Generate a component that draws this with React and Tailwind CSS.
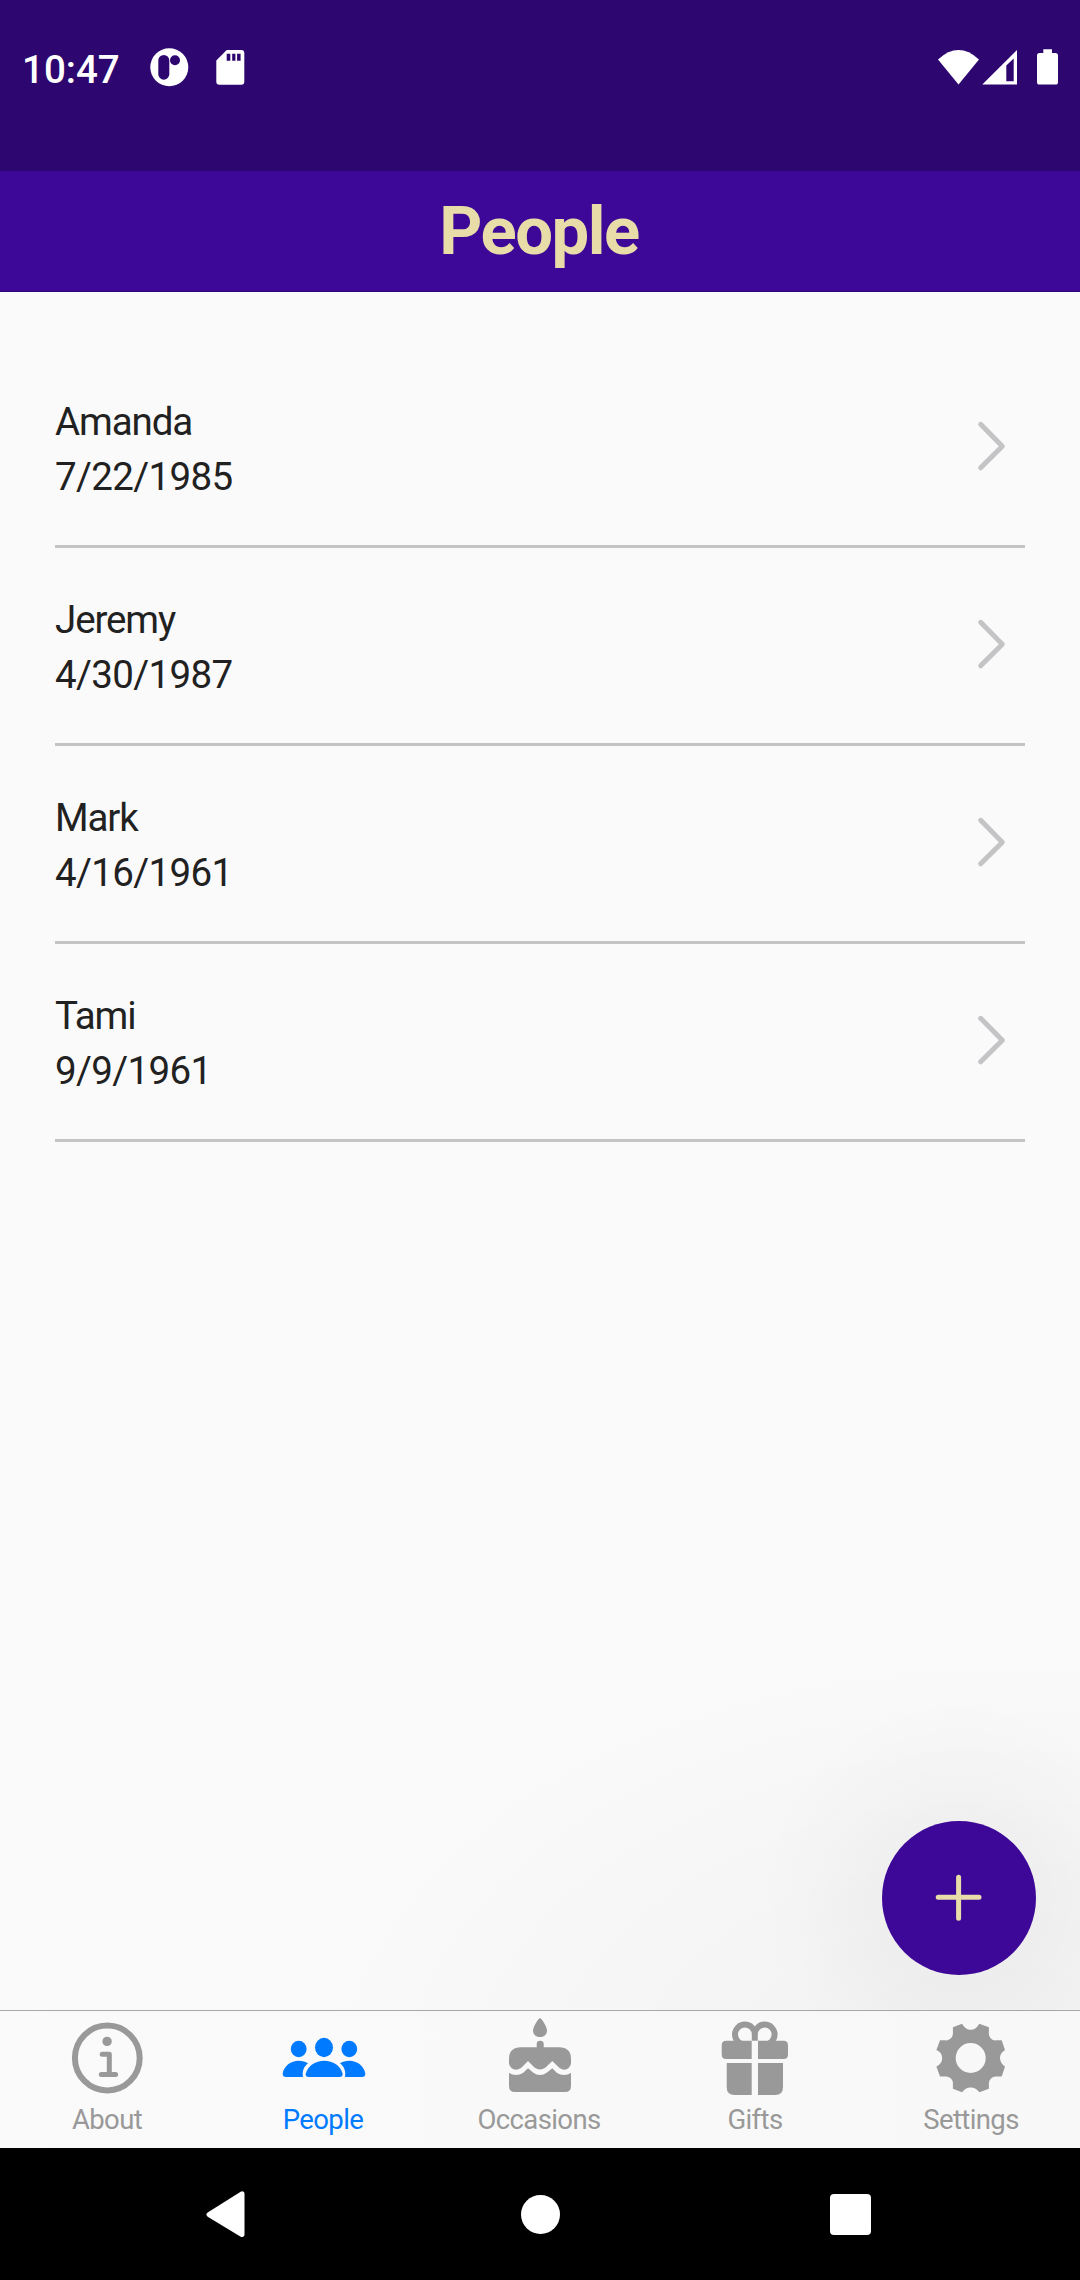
const people = [
  { name: "Amanda", date: "7/22/1985" },
  { name: "Jeremy", date: "4/30/1987" },
  { name: "Mark", date: "4/16/1961" },
  { name: "Tami", date: "9/9/1961" },
];

function StatusBar() {
  return (
    <div className="flex h-[171px] shrink-0 items-start bg-[#2d0670] pt-[46px] pl-[22px] text-white">
      <span className="mt-px w-[100px] text-[38.5px] leading-[46px] font-medium">10:47</span>
      <svg className="ml-[28px] h-[42px] w-[40px]" viewBox="0 0 40 42">
        <circle cx="19.3" cy="21.3" r="19" fill="currentColor" />
        <rect x="8.3" y="9" width="11" height="24.7" rx="5.5" fill="#2d0670" />
        <circle cx="25" cy="14.3" r="5" fill="#2d0670" />
      </svg>
      <svg className="ml-[26px] h-[42px] w-[30px]" viewBox="0 0 30 42">
        <path d="M10.7 4H25.3Q28.3 4 28.3 7V35.7Q28.3 38.7 25.3 38.7H3.3Q.3 38.7 .3 35.7V14.5Z" fill="currentColor" />
        <path d="M10.7 7.7h3.6v7h-3.6zM16.2 7.7h3.2v7h-3.2zM21.1 7.7h3.5v7h-3.5z" fill="#2d0670" />
      </svg>
      <div className="ml-auto flex pr-[22px]">
        <svg className="h-[42px] w-[42px]" viewBox="0 0 42 42">
          <path d="M20.5 38.5L0 13.5Q20.5 -5.3 41 13.5Z" fill="currentColor" />
        </svg>
        <svg className="ml-[2px] h-[42px] w-[36px]" viewBox="0 0 36 42">
          <path fillRule="evenodd" d="M.3 38.6L35 4V38.6ZM24.3 19.5V35.2H31.7V12.5Z" fill="currentColor" />
        </svg>
        <svg className="ml-[19px] h-[42px] w-[21px]" viewBox="0 0 21 42">
          <path d="M6.3 3.3H15V7H18.5Q21 7 21 9.5V36Q21 38.6 18.5 38.6H2.5Q0 38.6 0 36V9.5Q0 7 2.5 7H6.3Z" fill="currentColor" />
        </svg>
      </div>
    </div>
  );
}

function Row({ name, date }) {
  return (
    <li className="flex h-[198px] items-center justify-between border-b-[3px] border-[#c4c4c6]">
      <div className="mt-[2px] text-[38.5px] leading-[55px] text-[#212121]">
        <div className="tracking-[-1.1px]">{name}</div>
        <div className="tracking-[-0.65px]">{date}</div>
      </div>
      <svg className="mr-[18px] -mt-[4px] h-[52px] w-[30px]" viewBox="0 0 30 52">
        <path d="M3.7 4.3L25.3 26.2L3.7 47.8" fill="none" stroke="#c4c4c6" strokeWidth="5" strokeLinecap="round" strokeLinejoin="round" />
      </svg>
    </li>
  );
}

function AboutIcon() {
  return (
    <>
      <circle cx="44.3" cy="46" r="32.4" fill="none" stroke="currentColor" strokeWidth="6" />
      <circle cx="44.1" cy="29.4" r="4.7" fill="currentColor" />
      <path d="M39.2 42.2H46.3V62.6M38.3 62.6H52.6" fill="none" stroke="currentColor" strokeWidth="5" strokeLinecap="round" strokeLinejoin="round" />
    </>
  );
}

function PeopleIcon() {
  return (
    <g fill="currentColor">
      <ellipse cx="45" cy="35.5" rx="9" ry="9.7" />
      <ellipse cx="19.7" cy="37" rx="7.9" ry="8.3" />
      <ellipse cx="70.3" cy="37" rx="7.9" ry="8.3" />
      <path d="M7 65Q3.6 65 3.7 61.5C4.8 54 12 48.7 19.7 48.7C23.3 48.7 26.7 49.7 29 51.2C25 54.5 23 58.5 24 65Z" />
      <path d="M83 65Q86.4 65 86.3 61.5C85.2 54 78 48.7 70.3 48.7C66.7 48.7 63.3 49.7 61 51.2C65 54.5 67 58.5 66 65Z" />
      <path d="M30 65Q26 65 26.8 61.5C29 53.5 36.5 48.7 45.2 48.7S61.5 53.5 63.6 61.5Q64 65 60.5 65Z" />
    </g>
  );
}

function CakeIcon() {
  return (
    <g fill="currentColor">
      <path d="M45 6C46.5 6 52 15 52 18.5C52 22.5 49 25 45 25S38 22.5 38 18.5C38 15 43.5 6 45 6Z" />
      <path d="M41.7 35.3V32Q41.7 28.7 45.2 28.7T48.7 32V35.3H64Q76 35.3 76 47V52Q74 57.7 69.5 57.7Q67 57.7 64.5 56L57.3 49L50.5 55.5Q45 59.5 39.5 55.5L33 49L26 56Q23.5 57.7 20.7 57.7Q16 57.7 14 52V47Q14 35.3 26 35.3Z" />
      <path d="M14 61C18.5 63.5 23.5 63.5 28 61L33 56.3L38 60.5Q45 65.5 52 60.5L57.3 56.3L62 61C66.5 63.5 71.5 63.5 76 61V74Q76 80 70 80H20Q14 80 14 74Z" />
    </g>
  );
}

function GiftIcon() {
  return (
    <>
      <g fill="currentColor">
        <path d="M40.7 28.7V47H15Q10.7 47 10.7 42.5V33.2Q10.7 28.7 15 28.7ZM47 28.7H72.7Q77 28.7 77 33.2V42.5Q77 47 72.7 47H47Z" />
        <path d="M15.7 51H40.7V83H23.5Q15.7 83 15.7 75ZM47 51H72V75Q72 83 64.2 83H47Z" />
      </g>
      <path d="M43.8 28.7V22.5A9.9 9.9 0 1 0 33.9 32.4M43.8 22.5A9.9 9.9 0 1 1 53.7 32.4" fill="none" stroke="currentColor" strokeWidth="6" />
    </>
  );
}

function GearIcon() {
  return (
    <path
      transform="translate(43.7 46)"
      fill="currentColor"
      fillRule="evenodd"
      d="M8.6 -34.3L18.2 -30.7V-26C17.5 -21 21.5 -17 26 -17.7H31L34.3 -8Q29.3 -5 29.3 0T34.3 8.6L31 18.6H26C21.5 18 17.7 22 18.2 27V30.7L8.6 34.3Q5.5 29.6 0 29.6T-8.6 34.3L-17.8 30.7V26C-17.2 22 -21 18 -26 18.6H-30.7L-34.3 8.6Q-28.5 5.5 -28.5 0T-34.3 -8L-30.7 -17.7H-26C-21 -17 -17.2 -21 -17.8 -26V-30.7L-8.6 -34.3Q-5.5 -28.2 0 -28.2T8.6 -34.3ZM0 -15A15 15 0 1 0 0 15A15 15 0 1 0 0 -15Z"
    />
  );
}

const tabs = [
  { label: "About", Icon: AboutIcon },
  { label: "People", Icon: PeopleIcon, active: true },
  { label: "Occasions", Icon: CakeIcon },
  { label: "Gifts", Icon: GiftIcon },
  { label: "Settings", Icon: GearIcon },
];

function TabBar() {
  return (
    <nav className="relative grid h-[138px] shrink-0 grid-cols-5 border-t border-[#a7a7aa] bg-gradient-to-r from-[#fafafa] to-[#f8f8f8]">
      {tabs.map(({ label, Icon, active }) => (
        <div key={label} className={active ? "flex flex-col items-center pt-px text-[#007aff]" : "flex flex-col items-center pt-px text-[#999999]"}>
          <svg className="h-[84px] w-[90px] shrink-0" viewBox="0 0 90 84">
            <Icon />
          </svg>
          <span className="mr-[2px] text-[27.5px] leading-[48px] tracking-[-0.6px]">{label}</span>
        </div>
      ))}
    </nav>
  );
}

function SystemNav() {
  return (
    <div className="flex h-[132px] shrink-0 items-center justify-between bg-black pr-[209px] pl-[206px] text-white">
      <svg className="h-[46px] w-[40px]" viewBox="0 0 40 46">
        <path d="M36 2.8L3 23.5L36 43.5Z" fill="currentColor" stroke="currentColor" strokeWidth="5" strokeLinejoin="round" />
      </svg>
      <div className="ml-[5px] size-[39px] rounded-full bg-white" />
      <div className="size-[41px] rounded-[4px] bg-white" />
    </div>
  );
}

export default function App() {
  return (
    <div className="flex h-[2280px] w-[1080px] flex-col overflow-hidden bg-[#fafafa] font-['Roboto',sans-serif]">
      <StatusBar />
      <header className="flex h-[121px] shrink-0 items-center justify-center border-b border-[#2d0670] bg-[#3d0898]">
        <h1 className="mr-[2px] text-[67px] leading-[78px] font-bold tracking-[-1.5px] text-[#e8dca8]">People</h1>
      </header>
      <main className="relative flex-1 overflow-hidden bg-[radial-gradient(circle_200px_at_959px_1606px,rgba(0,0,0,0.03),rgba(0,0,0,0.023)_45%,rgba(0,0,0,0.008)_80%,transparent),radial-gradient(ellipse_720px_460px_at_1000px_1800px,rgba(0,0,0,0.034),rgba(0,0,0,0.024)_35%,rgba(0,0,0,0.01)_70%,transparent)] px-[55px] pt-[58px]">
        <ul>
          {people.map((person) => (
            <Row key={person.name} {...person} />
          ))}
        </ul>
        <button className="absolute right-[44px] bottom-[35px] flex size-[154px] items-center justify-center rounded-full bg-[#3d0898]">
          <svg className="size-[52px]" viewBox="0 0 52 52">
            <path d="M25.6 5.2V46.2M5.2 25.2H46" stroke="#e8dca8" strokeWidth="5" strokeLinecap="round" />
          </svg>
        </button>
      </main>
      <TabBar />
      <SystemNav />
    </div>
  );
}
